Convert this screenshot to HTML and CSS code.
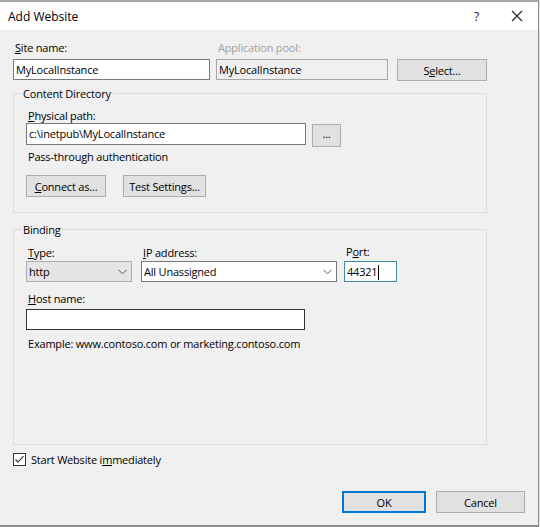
FILE: index.html
```html
<!DOCTYPE html>
<html>
<head>
<meta charset="utf-8">
<link rel="stylesheet" href="styles.css">
</head>
<body>
<div class="window">
  <div class="titlebar">
    <span class="title">Add Website</span>
    <span class="help">?</span>
    <svg class="close" width="12" height="12" viewBox="0 0 12 12"><path d="M1 1 L11 11 M11 1 L1 11" stroke="#222" stroke-width="1.1" fill="none"/></svg>
  </div>
  <div class="content">
    <div class="row1">
      <div class="field site">
        <div class="label"><u>S</u>ite name:</div>
        <div class="input">MyLocalInstance</div>
      </div>
      <div class="field pool">
        <div class="label disabled">Application pool:</div>
        <div class="input readonly">MyLocalInstance</div>
      </div>
      <div class="btn select">S<u>e</u>lect...</div>
    </div>

    <div class="group cd">
      <div class="group-title">Content Directory</div>
      <div class="label path-label"><u>P</u>hysical path:</div>
      <div class="path-row">
        <div class="input path">c:\inetpub\MyLocalInstance</div>
        <div class="btn dots">...</div>
      </div>
      <div class="label auth">Pass-through authentication</div>
      <div class="btn-row">
        <div class="btn connect"><u>C</u>onnect as...</div>
        <div class="btn test">Test Settings...</div>
      </div>
    </div>

    <div class="group binding">
      <div class="group-title">Binding</div>
      <div class="bind-row">
        <div class="field type">
          <div class="label"><u>T</u>ype:</div>
          <div class="input combo gray">http<svg class="chev" width="9" height="6" viewBox="0 0 9 6"><path d="M0.5 0.8 L4.5 4.8 L8.5 0.8" stroke="#555" stroke-width="1" fill="none"/></svg></div>
        </div>
        <div class="field ip">
          <div class="label"><u>I</u>P address:</div>
          <div class="input combo">All Unassigned<svg class="chev" width="9" height="6" viewBox="0 0 9 6"><path d="M0.5 0.8 L4.5 4.8 L8.5 0.8" stroke="#555" stroke-width="1" fill="none"/></svg></div>
        </div>
        <div class="field port">
          <div class="label">P<u>o</u>rt:</div>
          <div class="input focus">44321<span class="caret"></span></div>
        </div>
      </div>
      <div class="label host-label"><u>H</u>ost name:</div>
      <div class="input host"></div>
      <div class="label example">Example: www.contoso.com or marketing.contoso.com</div>
    </div>

    <div class="check-row">
      <svg class="checkbox" width="13" height="13" viewBox="0 0 13 13"><rect x="0.5" y="0.5" width="12" height="12" fill="#fff" stroke="#333"/><path d="M2.5 6.5 L5 9 L10.5 3" stroke="#222" stroke-width="1.1" fill="none"/></svg>
      <span class="label">Start Website i<u>m</u>mediately</span>
    </div>

    <div class="footer">
      <div class="btn ok">OK</div>
      <div class="btn cancel">Cancel</div>
    </div>
  </div>
</div>
</body>
</html>
```

FILE: styles.css
```css
html, body {
  margin: 0;
  padding: 0;
  background: #e8e8e8;
}
body {
  font-family: "Open Sans", "Noto Sans", sans-serif;
  font-size: 11px;
  letter-spacing: -0.2px;
  color: #000;
}
u {
  text-decoration: underline;
  text-underline-offset: 1px;
}
.window {
  width: 538px;
  height: 523px;
  border-top: 2px solid #a8a8a8;
  border-bottom: 2px solid #8c8c8c;
  border-right: 1px solid #8c8c8c;
  background: #f0f0f0;
  display: flex;
  flex-direction: column;
}
.titlebar {
  height: 28px;
  background: #fff;
  display: flex;
  align-items: center;
  flex-shrink: 0;
}
.title {
  font-size: 12px;
  letter-spacing: 0;
  margin-left: 8px;
  flex: 1;
}
.help {
  font-size: 12px;
  color: #222;
  margin-right: 32px;
}
.close {
  margin-right: 15px;
}
.content {
  flex: 1;
  padding: 10px 0 0 13px;
  display: flex;
  flex-direction: column;
}
.label {
  line-height: 15px;
  white-space: nowrap;
  padding-left: 2px;
}
.label.disabled {
  color: #a0a0a0;
}
.input {
  box-sizing: border-box;
  height: 21px;
  border: 1px solid #7a7a7a;
  background: #fff;
  line-height: 19px;
  padding-left: 2px;
  white-space: nowrap;
  overflow: hidden;
}
.input.readonly {
  background: #f0f0f0;
  border-color: #a8a8a8;
}
.btn {
  box-sizing: border-box;
  height: 22px;
  border: 1px solid #adadad;
  background: #e1e1e1;
  display: flex;
  align-items: center;
  justify-content: center;
  white-space: nowrap;
}
.row1 {
  display: flex;
  align-items: flex-end;
}
.field {
  display: flex;
  flex-direction: column;
  gap: 4px;
}
.site { width: 197px; }
.pool { width: 172px; margin-left: 6px; }
.select { width: 90px; margin-left: 9px; margin-bottom: -1px; }

.group {
  width: 474px;
  box-sizing: border-box;
  border: 1px solid #dcdcdc;
  padding: 0 0 0 12px;
}
.group-title {
  width: fit-content;
  background: #f0f0f0;
  line-height: 15px;
  padding: 0 2px;
  margin: -8px 0 0 -5px;
}
.cd {
  margin-top: 13px;
  height: 120px;
}
.path-label { margin-top: 7px; }
.path-row {
  display: flex;
  align-items: flex-start;
}
.path { width: 280px; height: 22px; line-height: 20px; }
.dots { width: 29px; height: 23px; margin-left: 6px; margin-top: 1px; padding-bottom: 4px; }
.auth { margin-top: 2px; }
.btn-row {
  display: flex;
  gap: 17px;
  margin-top: 11px;
}
.connect { width: 80px; }
.test { width: 83px; }

.binding {
  margin-top: 16px;
  height: 216px;
}
.bind-row {
  display: flex;
  margin-top: 8px;
}
.bind-row .field { gap: 1px; }
.type { width: 106px; }
.ip { width: 196px; margin-left: 9px; }
.port { width: 53px; margin-left: 7px; }
.port .label { margin-top: -1px; margin-bottom: 1px; }
.combo {
  display: flex;
  align-items: center;
  justify-content: space-between;
  padding-right: 4px;
}
.combo.gray {
  background: #e5e5e5;
  border-color: #adadad;
}
.focus {
  border-color: #3d8da0;
}
.caret {
  display: inline-block;
  width: 0;
  height: 15px;
  border-left: 1px solid #000;
  vertical-align: middle;
  margin-left: 1px;
  margin-top: -2px;
}
.host-label { margin-top: 9px; }
.host {
  width: 279px;
  margin-top: 3px;
  border-color: #333;
}
.example { margin-top: 6px; }

.check-row {
  display: flex;
  align-items: center;
  gap: 3px;
  margin-top: 7px;
}
.footer {
  display: flex;
  margin-top: 24px;
  padding-left: 329px;
}
.ok {
  width: 84px;
  border: 2px solid #0078d7;
}
.cancel {
  width: 89px;
  margin-left: 10px;
}
```
